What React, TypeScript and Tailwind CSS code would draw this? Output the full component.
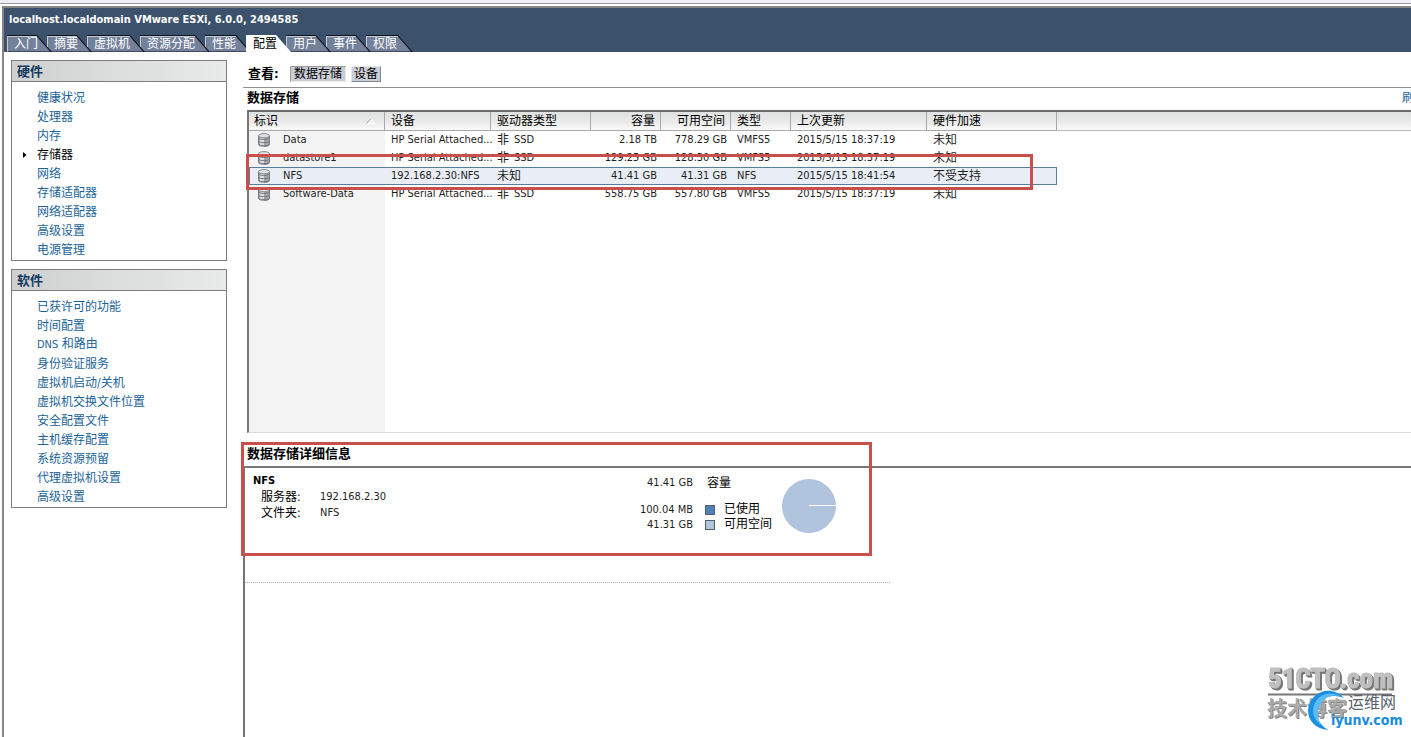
import React from "react";
import clsx from "clsx";

const tabs = [
  { label: "入门", w: "w-[45px]", z: "z-9" },
  { label: "摘要", w: "w-[45px]", z: "z-8" },
  { label: "虚拟机", w: "w-[58px]", z: "z-7" },
  { label: "资源分配", w: "w-[70px]", z: "z-6" },
  { label: "性能", w: "w-[46px]", z: "z-5" },
  { label: "配置", w: "w-[45px]", z: "z-10", active: true },
  { label: "用户", w: "w-[45px]", z: "z-4" },
  { label: "事件", w: "w-[45px]", z: "z-3" },
  { label: "权限", w: "w-[47px]", z: "z-2" },
];

const hardware = ["健康状况", "处理器", "内存", "存储器", "网络", "存储适配器", "网络适配器", "高级设置", "电源管理"];
const software = [
  "已获许可的功能", "时间配置", "DNS 和路由", "身份验证服务", "虚拟机启动/关机", "虚拟机交换文件位置",
  "安全配置文件", "主机缓存配置", "系统资源预留", "代理虚拟机设置", "高级设置",
];

const columns = [
  { label: "标识", w: "w-[136px]" },
  { label: "设备", w: "w-[106px]" },
  { label: "驱动器类型", w: "w-[100px]" },
  { label: "容量", w: "w-[70px]", right: true },
  { label: "可用空间", w: "w-[70px]", right: true },
  { label: "类型", w: "w-[60px]" },
  { label: "上次更新", w: "w-[136px]" },
  { label: "硬件加速", w: "w-[130px]" },
];

const rows = [
  ["Data", "HP Serial Attached...", "SSD", "2.18 TB", "778.29 GB", "VMFS5", "2015/5/15 18:37:19", "未知"],
  ["datastore1", "HP Serial Attached...", "SSD", "129.25 GB", "128.30 GB", "VMFS5", "2015/5/15 18:37:19", "未知"],
  ["NFS", "192.168.2.30:NFS", "", "41.41 GB", "41.31 GB", "NFS", "2015/5/15 18:41:54", "不受支持"],
  ["Software-Data", "HP Serial Attached...", "SSD", "558.75 GB", "557.80 GB", "VMFS5", "2015/5/15 18:37:19", "未知"],
];

function DatastoreIcon() {
  return (
    <svg width="14" height="14" viewBox="0 0 14 14" className="shrink-0" aria-hidden="true">
      <path d="M1.500 2.500v9c0 1 2.300 2 5.500 2s5.500-1 5.500-2v-9z" fill="#a3a6ab" stroke="#7d8187" />
      <path d="M4 4v9.200M6 4v9.500" stroke="#e9eaec" strokeWidth="1.600" />
      <path d="M1.500 5c1 1.100 2.500 1.400 5.500 1.400s4.500-.3 5.500-1.400M1.500 8.200c1 1.100 2.500 1.400 5.500 1.400s4.500-.3 5.500-1.400M1.500 11.200c1 1.100 2.500 1.400 5.500 1.400s4.500-.3 5.500-1.400" fill="none" stroke="#6d7177" strokeWidth=".9" />
      <ellipse cx="7" cy="2.700" rx="5.500" ry="2.100" fill="#dfe1e3" stroke="#8a8d93" />
    </svg>
  );
}

function Tab({ label, w, z, active }: { label: string; w: string; z: string; active?: boolean }) {
  return (
    <button
      type="button"
      className={clsx(
        "relative -mr-[5px] h-[17px] [clip-path:polygon(0_0,calc(100%-15px)_0,100%_100%,0_100%)]",
        w, z,
        active ? "bg-white text-black" : "bg-[#10151d] text-white",
      )}
    >
      <span
        className={clsx(
          "flex h-4 items-center border-l border-t pl-[6px] text-xs leading-4 whitespace-nowrap",
          active
            ? "border-white"
            : "border-[#c3cad6] bg-[#73819b] [clip-path:polygon(0_0,calc(100%-16px)_0,calc(100%-2px)_100%,0_100%)]",
        )}
      >
        {label}
      </span>
    </button>
  );
}

function SidePanel({ title, items, current }: { title: string; items: string[]; current?: string }) {
  return (
    <section className="border border-[#7d7d7d] bg-white">
      <h2 className="flex h-[21px] items-center border-b border-[#7d7d7d] bg-linear-to-r from-[#cfd0d0] to-[#e9eaea] pt-px pl-[5px] text-[13px] leading-5 font-bold text-[#143a60]">
        {title}
      </h2>
      <ul className="pt-[6px] pb-px">
        {items.map((item) => (
          <li key={item} className="flex h-[19px] items-center">
            <span className="flex w-[25px] pl-[11px]">
              {item === current && (
                <svg width="4" height="6" viewBox="0 0 4 6" aria-hidden="true"><path d="M0 0l3.500 3L0 6z" fill="#000" /></svg>
              )}
            </span>
            <a href="#" className={clsx("text-xs", item === current ? "text-black" : "text-[#1b6399]")}>
              {item.startsWith("DNS") ? <><span className="text-[11px]">DNS</span>{item.slice(3)}</> : item}
            </a>
          </li>
        ))}
      </ul>
    </section>
  );
}

function DatastoreTable() {
  return (
    <table className="w-full table-fixed border-separate border-spacing-0 text-[11px] text-[#1d1d1d]">
      <colgroup>
        {columns.map((c) => <col key={c.label} className={c.w} />)}
        <col />
      </colgroup>
      <thead>
        <tr className="h-[19px] bg-linear-to-b from-[#e0e1e1] via-[#e9e9e9] to-[#fcfcfc]">
          {columns.map((c, i) => (
            <th
              key={c.label}
              className={clsx(
                "h-[19px] border-r border-b border-[#a8a8a8] p-0 text-xs leading-4 font-normal text-black",
                i === 0 ? "pl-[5px]" : "pl-[6px]",
                c.right ? "pr-[5px] text-right" : "text-left",
              )}
            >
              {i === 0 ? (
                <span className="flex items-center justify-between pr-2">
                  {c.label}
                  <svg width="10" height="6" viewBox="0 0 10 6" aria-hidden="true">
                    <path d="M.5 5.500L5 .5l4.500 5z" fill="#f3f3f3" stroke="#fff" />
                    <path d="M.5 5.500L5 .5" stroke="#999" fill="none" />
                  </svg>
                </span>
              ) : c.label}
            </th>
          ))}
          <td className="border-b border-[#b9b9b9] p-0" />
        </tr>
      </thead>
      <tbody>
        {rows.map((r) => {
          const selected = r[0] === "NFS";
          return (
            <tr key={r[0]}>
              {r.map((cell, i) => (
                <td
                  key={i}
                  className={clsx(
                    "h-[18px] border-y p-0 align-middle leading-[14px] whitespace-nowrap",
                    selected ? "border-[#567f9b] bg-[#e9edf5]" : "border-transparent",
                    selected && i === 0 && "border-l",
                    selected && i === 7 && "border-r",
                    i === 0 ? (selected ? "pl-[7px]" : "pl-2") : "pl-[6px]",
                    (i === 3 || i === 4) && "pr-1 text-right",
                  )}
                >
                  {i === 0 ? (
                    <span className="flex h-4 items-center gap-3"><DatastoreIcon />{cell}</span>
                  ) : i === 2 ? (
                    <span className="flex h-4 items-center gap-[5px]">
                      <span className="text-xs leading-[14px]">{cell ? "非" : "未知"}</span>
                      {cell}
                    </span>
                  ) : i === 7 ? (
                    <span className="flex h-4 items-center text-xs leading-[14px]">{cell}</span>
                  ) : cell}
                </td>
              ))}
              <td className="p-0" />
            </tr>
          );
        })}
      </tbody>
    </table>
  );
}

function Details() {
  return (
    <div className="flex h-[115px] w-[645px] border-b border-dotted border-[#a9a9a9] text-[11px] text-[#1d1d1d]">
      <div className="w-[330px] pt-[5px] pl-2">
        <h3 className="h-4 leading-4 font-bold text-black">NFS</h3>
        <dl className="grid grid-cols-[59px_1fr] pl-2 leading-4">
          <dt className="text-xs leading-4 text-black">服务器:</dt><dd>192.168.2.30</dd>
          <dt className="text-xs leading-4 text-black">文件夹:</dt><dd>NFS</dd>
        </dl>
      </div>
      <dl className="grid h-fit grid-cols-[118px_auto] gap-x-3 pt-[7px] leading-4">
        <dd className="text-right">41.41 GB</dd>
        <dt className="pb-[11px] pl-[2px] text-xs leading-4 text-black">容量</dt>
        <dd className="order-2 text-right leading-[15px]">100.04 MB</dd>
        <dt className="order-2 flex items-center gap-[9px] text-xs leading-[15px] text-black"><i className="size-[10px] border border-[#55606c] bg-[#4d82b8]" />已使用</dt>
        <dd className="order-3 text-right leading-[15px]">41.31 GB</dd>
        <dt className="order-3 flex items-center gap-[9px] text-xs leading-[15px] text-black"><i className="size-[10px] border border-[#55606c] bg-[#b0c4de]" />可用空间</dt>
      </dl>
      <svg width="54" height="54" viewBox="0 0 54 54" className="mt-[11px] ml-[10px]" role="img" aria-label="容量">
        <circle cx="27" cy="27" r="27" fill="#b0c4de" />
        <path d="M27 26.500h27" stroke="#fff" />
      </svg>
    </div>
  );
}

function Watermark() {
  return (
    <div className="pointer-events-none absolute right-0 bottom-0 h-[77px] w-[149px]">
      <svg width="149" height="77" viewBox="0 0 149 77">
        <text x="6" y="28" className="[filter:drop-shadow(1px_1px_0_#777)_drop-shadow(1px_1px_0_#777)]" fill="#c0c0c0" stroke="#c0c0c0" strokeWidth="1" fontFamily="'Roboto Condensed','Liberation Sans Narrow','Liberation Sans',sans-serif" fontWeight="700" fontSize="27">51CTO.com</text>
        <path d="M6 34.500h124" stroke="#777" strokeWidth="2" />
        <text x="5" y="56" className="[filter:drop-shadow(1px_1px_0_#858585)]" fill="#aaa" fontFamily="'Noto Sans CJK SC',sans-serif" fontWeight="700" fontSize="20">技术博客</text>
        <path d="M82 38C68 23 47 33 46 50C46 61 54 69 66 70C57 64 53 56 55 49C58 37 70 33 82 38Z" fill="#1b8fe0" />
        <path d="M78 36C64 29 52 38 51 50C51 57 55 62 59 65C55 57 55 51 57 47C61 38 69 34 78 36Z" fill="#5bbcf5" />
        <text x="86" y="48" fill="#55616e" fontFamily="'Noto Sans CJK SC',sans-serif" fontSize="16">运维网</text>
        <text x="69" y="65" fill="#168be0" fontFamily="'DejaVu Sans Condensed','Liberation Sans',sans-serif" fontSize="14" fontWeight="700">iyunv.com</text>
      </svg>
    </div>
  );
}

export default function App() {
  return (
    <div className="relative flex min-h-screen flex-col overflow-hidden bg-white font-['DejaVu_Sans_Condensed','Noto_Sans','Noto_Sans_CJK_SC',sans-serif]">
      <div className="h-1 border-b border-[#9a9a9a] bg-[#eeeef2]" />
      <div className="mt-[2px] ml-[2px] flex grow flex-col border-t-2 border-l-2 border-[#858585]">
        <header className="bg-[#3c526c]">
          <h1 className="flex h-[27px] items-center pb-[3px] pl-[5px] text-[11px] font-bold text-white">
            localhost.localdomain VMware ESXi, 6.0.0, 2494585
          </h1>
          <nav className="isolate flex pl-[3px]">
            {tabs.map((t) => <Tab key={t.label} {...t} />)}
          </nav>
        </header>

        <div className="flex grow">
          <aside className="flex w-[223px] shrink-0 flex-col gap-2 pt-2 pl-[7px]">
            <SidePanel title="硬件" items={hardware} current="存储器" />
            <SidePanel title="软件" items={software} />
          </aside>

          <main className="ml-4 flex min-w-0 grow flex-col">
            <div className="flex h-9 items-center gap-[5px] border-b border-[#8f8f8f] pt-2 pl-[5px] text-xs">
              <span className="w-[37px] text-[13px] font-bold whitespace-nowrap">查看:</span>
              <button type="button" className="h-4 border border-[#9a9ca4] border-r-[#e8e8e8] border-b-[#e8e8e8] bg-[#cbcdd5] px-[3px] text-xs leading-[14px]">数据存储</button>
              <button type="button" className="h-4 border border-[#e8e8e8] border-r-[#85878f] border-b-[#85878f] bg-[#cbcdd5] px-[2px] text-xs leading-[14px]">设备</button>
            </div>

            <div className="flex h-[22px] items-start justify-between overflow-hidden pl-1">
              <h2 className="text-[13px] leading-5 font-bold">数据存储</h2>
              <a href="#" className="w-[9px] overflow-hidden text-xs leading-5 whitespace-nowrap text-[#1b6399]">刷新</a>
            </div>

            <div className="relative ml-1">
              <div className="h-[323px] border-t-2 border-b border-l-2 border-t-[#6d6d6d] border-b-[#dcdcdc] border-l-[#777] bg-[linear-gradient(to_right,#f3f3f3_136px,#fff_136px)]">
                <DatastoreTable />
              </div>
              <div className="pointer-events-none absolute top-11 -left-px h-9 w-[787px] border-3 border-[#c94f4d]" />
            </div>

            <div className="relative mt-[9px] flex grow flex-col">
              <h2 className="h-6 pt-[2px] pl-1 text-[13px] leading-5 font-bold">数据存储详细信息</h2>
              <div className="grow border-t-2 border-l-2 border-[#777]">
                <Details />
              </div>
              <div className="pointer-events-none absolute top-0 -left-[2px] h-[114px] w-[631px] border-3 border-[#c94f4d]" />
            </div>
          </main>
        </div>
      </div>
      <Watermark />
    </div>
  );
}
